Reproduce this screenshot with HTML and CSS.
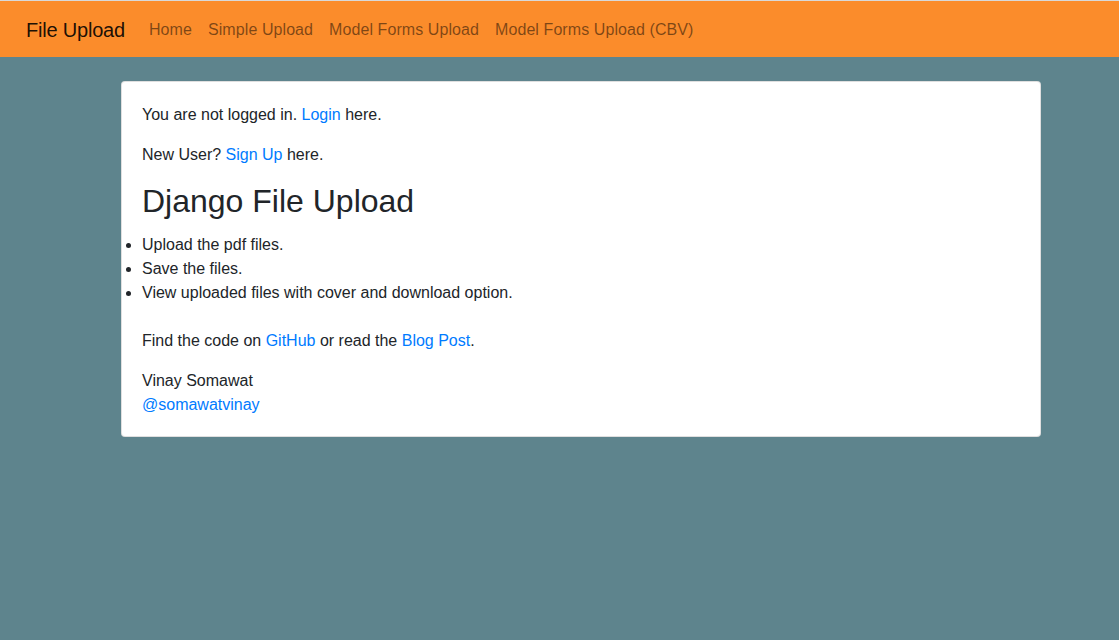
FILE: index.html
```html
<!DOCTYPE html>
<html lang="en">
<head>
<meta charset="UTF-8">
<meta name="viewport" content="width=device-width, initial-scale=1.0">
<title>File Upload</title>
<link rel="stylesheet" href="styles.css">
</head>
<body>

<nav class="navbar">
    <a class="brand" href="#">File Upload</a>
    <ul class="nav-links">
        <li><a href="#">Home</a></li>
        <li><a href="#">Simple Upload</a></li>
        <li><a href="#">Model Forms Upload</a></li>
        <li><a href="#">Model Forms Upload (CBV)</a></li>
    </ul>
</nav>

<div class="main">
    <div class="card">
        <p>You are not logged in. <a href="#">Login</a> here.</p>
        <p>New User? <a href="#">Sign Up</a> here.</p>

        <h2>Django File Upload</h2>
        <ul class="features">
            <li>Upload the pdf files.</li>
            <li>Save the files.</li>
            <li>View uploaded files with cover and download option.</li>
        </ul>

        <p class="code-line">Find the code on <a href="#">GitHub</a> or read the <a href="#">Blog Post</a>.</p>
        <p class="author">Vinay Somawat<br><a href="#">@somawatvinay</a></p>
    </div>
</div>

</body>
</html>
```

FILE: styles.css
```css
body {
    font-family: "Liberation Sans", Arial, sans-serif;
    font-size: 16px;
    line-height: 1.5;
    color: #212529;
    background-color: #5e848d;
    margin: 0;
}

a {
    color: #007bff;
    text-decoration: none;
}

.navbar {
    box-sizing: border-box;
    display: flex;
    align-items: center;
    height: 57px;
    padding: 2px 26px 0;
    background-color: #fb8c2b;
    border-top: 1px solid #d9d9d9;
}

.brand {
    font-size: 20px;
    line-height: 30px;
    letter-spacing: -0.2px;
    color: rgba(0, 0, 0, 0.9);
    margin-right: 16px;
}

.nav-links {
    display: flex;
    list-style: none;
    margin: 0;
    padding: 0;
}

.nav-links a {
    display: block;
    padding: 8px;
    letter-spacing: 0.08px;
    color: rgba(0, 0, 0, 0.5);
}

.main {
    padding: 24px 0 0 121px;
}

.card {
    width: 878px;
    background-color: #ffffff;
    border: 1px solid rgba(0, 0, 0, 0.125);
    border-radius: 4px;
    padding: 21px 20px 19px;
}

.card p {
    margin: 0 0 16px;
}

.card h2 {
    font-size: 32px;
    font-weight: 500;
    line-height: 1.2;
    margin: -1px 0 13px;
}

.features {
    margin: 0 0 24px;
    padding: 0;
}

.card .author {
    margin-bottom: 0;
}
```
